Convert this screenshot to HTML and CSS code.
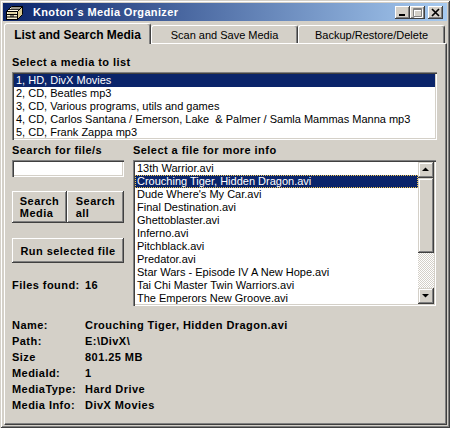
FILE: index.html
```html
<!DOCTYPE html>
<html>
<head>
<meta charset="utf-8">
<title>Knoton´s Media Organizer</title>
<link rel="stylesheet" href="styles.css">
</head>
<body>
<div class="window">
  <div class="titlebar">
    <svg class="app-icon" width="17" height="15" viewBox="0 0 17 15">
      <path d="M0.5 6.5 L5.5 1.5 L16.5 1.5 L11.5 6.5 Z" fill="#fffbe8" stroke="#000"/>
      <path d="M11.5 6.5 L16.5 1.5 L16.5 9.5 L11.5 14.5 Z" fill="#d8c890" stroke="#000"/>
      <rect x="0.5" y="6.5" width="11" height="8" fill="#f8f0d0" stroke="#000"/>
      <path d="M0.5 9.5 H11.5 M0.5 12 H11.5" stroke="#000"/>
      <rect x="2" y="7.5" width="8" height="1" fill="#c8b878"/>
      <rect x="4" y="10.5" width="4" height="1" fill="#000"/>
      <path d="M3 4.5 H13 M5 3 H15" stroke="#000" stroke-width="0.8"/>
    </svg>
    <span class="title">Knoton´s Media Organizer</span>
    <div class="caption-btns">
      <div class="cbtn">
        <svg width="15" height="13" viewBox="0 0 15 13"><rect x="4" y="8" width="6" height="2" fill="#000"/></svg>
      </div>
      <div class="cbtn">
        <svg width="15" height="13" viewBox="0 0 15 13">
          <path d="M4.5 3.5 H12.5 V11.5 H4.5 Z M4.5 4.5 H12.5" fill="none" stroke="#fff"/>
          <path d="M3.5 2.5 H11.5 V10.5 H3.5 Z M3.5 3.5 H11.5" fill="none" stroke="#808080"/>
        </svg>
      </div>
      <div class="cbtn close">
        <svg width="15" height="13" viewBox="0 0 15 13"><path d="M4 3 L11 10 M11 3 L4 10" stroke="#000" stroke-width="1.7"/></svg>
      </div>
    </div>
  </div>

  <div class="tabs">
    <div class="tab active">List and Search Media</div>
    <div class="tab">Scan and Save Media</div>
    <div class="tab">Backup/Restore/Delete</div>
  </div>

  <div class="panel">
    <div class="label">Select a media to list</div>
    <div class="listbox media-list">
      <div class="item selected">1, HD, DivX Movies</div>
      <div class="item">2, CD, Beatles mp3</div>
      <div class="item">3, CD, Various programs, utils and games</div>
      <div class="item">4, CD, Carlos Santana / Emerson, Lake &nbsp;&amp; Palmer / Samla Mammas Manna mp3</div>
      <div class="item">5, CD, Frank Zappa mp3</div>
    </div>

    <div class="row">
      <div class="leftcol">
        <div class="label">Search for file/s</div>
        <div class="textbox"></div>
        <div class="btnpair">
          <div class="btn w55"><span>Search<br>Media</span></div>
          <div class="btn w57"><span>Search<br>all</span></div>
        </div>
        <div class="btn run"><span>Run selected file</span></div>
        <div class="label found"><span class="found-key">Files found:</span>16</div>
      </div>
      <div class="rightcol">
        <div class="label">Select a file for more info</div>
        <div class="listbox file-list">
          <div class="items">
            <div class="item">13th Warrior.avi</div>
            <div class="item selected focus">Crouching Tiger, Hidden Dragon.avi</div>
            <div class="item">Dude Where's My Car.avi</div>
            <div class="item">Final Destination.avi</div>
            <div class="item">Ghettoblaster.avi</div>
            <div class="item">Inferno.avi</div>
            <div class="item">Pitchblack.avi</div>
            <div class="item">Predator.avi</div>
            <div class="item">Star Wars - Episode IV A New Hope.avi</div>
            <div class="item">Tai Chi Master Twin Warriors.avi</div>
            <div class="item">The Emperors New Groove.avi</div>
          </div>
          <div class="scrollbar">
            <div class="sbtn">
              <svg width="16" height="16" viewBox="0 0 16 16"><path d="M4 9 H11 L7.5 5.5 Z" fill="#000"/></svg>
            </div>
            <div class="thumb"></div>
            <div class="track"></div>
            <div class="sbtn">
              <svg width="16" height="16" viewBox="0 0 16 16"><path d="M4 6 H11 L7.5 9.5 Z" fill="#000"/></svg>
            </div>
          </div>
        </div>
      </div>
    </div>

    <div class="details">
      <span>Name:</span><span>Crouching Tiger, Hidden Dragon.avi</span>
      <span>Path:</span><span>E:\DivX\</span>
      <span>Size</span><span>801.25 MB</span>
      <span>MediaId:</span><span>1</span>
      <span>MediaType:</span><span>Hard Drive</span>
      <span>Media Info:</span><span>DivX Movies</span>
    </div>
  </div>
</div>
</body>
</html>
```

FILE: styles.css
```css
* { box-sizing: border-box; margin: 0; padding: 0; }
html, body { width: 450px; height: 428px; overflow: hidden; }
body {
  font-family: "Liberation Sans", Arial, sans-serif;
  font-size: 11px;
  color: #000;
  background: #d4d0c8;
}

.window {
  width: 450px;
  height: 428px;
  display: flex;
  flex-direction: column;
  padding: 3px;
  background: #d4d0c8;
  box-shadow: inset 1px 1px #d4d0c8, inset -1px -1px #404040, inset 2px 2px #fff, inset -2px -2px #808080;
}

/* title bar */
.titlebar {
  height: 18px;
  flex: none;
  display: flex;
  align-items: center;
  padding-left: 3px;
  margin-bottom: 2px;
  background: linear-gradient(90deg, #0a246a 0%, #a6caf0 100%);
}
.app-icon { flex: none; display: block; }
.title {
  margin-left: 10px;
  color: #fff;
  font-weight: bold;
  font-size: 11px;
  letter-spacing: 0.35px;
  white-space: nowrap;
}
.caption-btns {
  margin-left: auto;
  margin-right: 4px;
  display: flex;
}
.cbtn {
  width: 15px;
  height: 13px;
  background: #d4d0c8;
  box-shadow: inset -1px -1px #404040, inset 1px 1px #fff, inset -2px -2px #808080;
}
.cbtn svg { display: block; }
.cbtn.close { margin-left: 3px; }

/* tabs */
.tabs {
  height: 20px;
  flex: none;
  display: flex;
  align-items: flex-end;
  margin-left: 1px;
  position: relative;
  z-index: 1;
}
.tab {
  width: 147px;
  height: 18px;
  display: flex;
  align-items: center;
  justify-content: center;
  border: 1px solid #fff;
  border-bottom: 0;
  border-right-color: #404040;
  border-radius: 3px 3px 0 0;
  box-shadow: inset -1px 0 #808080;
  background: #d4d0c8;
  white-space: nowrap;
  font-size: 11px;
}
.tab.active {
  height: 21px;
  margin-bottom: -1px;
  font-weight: bold;
  font-size: 12px;
  padding-top: 1px;
}

/* panel */
.panel {
  flex: 1;
  margin-left: 1px;
  border: 1px solid #fff;
  border-right-color: #404040;
  border-bottom-color: #404040;
  box-shadow: inset -1px -1px #808080;
  padding: 11px 0 0 7px;
}

.label {
  font-weight: bold;
  line-height: 14px;
  letter-spacing: 0.45px;
  white-space: nowrap;
}

.listbox {
  background: #fff;
  padding: 2px;
  overflow: hidden;
  box-shadow: inset 1px 1px #808080, inset 2px 2px #404040, inset -1px -1px #fff, inset -2px -2px #d4d0c8;
}
.item {
  line-height: 13px;
  height: 13px;
  padding-left: 2px;
  white-space: nowrap;
  overflow: hidden;
}
.item.selected { background: #0a246a; color: #fff; }
.item.focus { outline: 1px dotted #f0c850; outline-offset: -1px; }

.media-list {
  width: 425px;
  height: 68px;
  margin-top: 3px;
}

.row {
  display: flex;
  gap: 9px;
  margin-top: 3px;
}
.leftcol {
  width: 112px;
  display: flex;
  flex-direction: column;
}
.textbox {
  height: 17px;
  margin-top: 3px;
  background: #fff;
  box-shadow: inset 1px 1px #808080, inset 2px 2px #404040, inset -1px -1px #fff, inset -2px -2px #d4d0c8;
}

.btn {
  display: flex;
  align-items: center;
  justify-content: center;
  background: #d4d0c8;
  box-shadow: inset -1px -1px #404040, inset 1px 1px #fff, inset -2px -2px #808080;
  font-weight: bold;
  letter-spacing: 0.45px;
  white-space: nowrap;
}
.btn span { text-align: left; line-height: 12px; }
.btnpair {
  display: flex;
  height: 32px;
  margin-top: 14px;
}
.w55 { width: 55px; }
.w57 { width: 57px; }
.run {
  height: 25px;
  margin-top: 15px;
}
.run span { padding-top: 1px; }
.found { margin-top: 15px; }
.found-key { display: inline-block; width: 73px; }

.rightcol { width: 303px; }
.file-list {
  height: 146px;
  margin-top: 3px;
  display: flex;
}
.items { flex: 1; min-width: 0; }
.scrollbar {
  width: 16px;
  flex: none;
  display: flex;
  flex-direction: column;
}
.sbtn, .thumb {
  background: #d4d0c8;
  box-shadow: inset -1px -1px #404040, inset 1px 1px #d4d0c8, inset -2px -2px #808080, inset 2px 2px #fff;
}
.sbtn { height: 16px; flex: none; }
.sbtn svg { display: block; }
.thumb { height: 75px; flex: none; }
.track {
  flex: 1;
  background: repeating-conic-gradient(#d4d0c8 0 25%, #fff 0 50%) 0 0 / 2px 2px;
}

.details {
  margin-top: 11px;
  display: grid;
  grid-template-columns: 73px auto;
  line-height: 16px;
  font-weight: bold;
  letter-spacing: 0.45px;
  white-space: nowrap;
}
```
